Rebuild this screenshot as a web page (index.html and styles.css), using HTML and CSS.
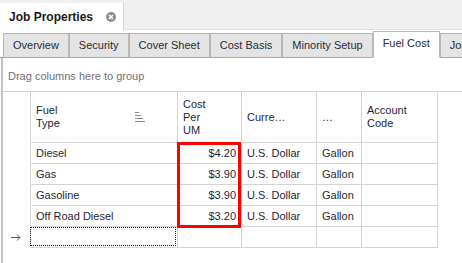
FILE: index.html
```html
<!DOCTYPE html>
<html lang="en">
  <head>
    <meta charset="UTF-8">
    <meta name="viewport" content="width=device-width, initial-scale=1.0">
    <title>Job Properties</title>
    <link rel="stylesheet" href="styles.css">
  </head>
  <body>
    <header class="doc-bar">
      <div class="doc-tab">
        <span>Job Properties</span>
        <svg class="close" viewBox="0 0 10 10" width="10" height="10" aria-hidden="true">
          <circle cx="5" cy="5" r="5" fill="#8c8c8c"/>
          <path d="M3 3l4 4M7 3l-4 4" stroke="#fff" stroke-width="1.6"/>
        </svg>
      </div>
    </header>

    <main class="panel">
      <nav class="tabs">
        <button class="tab">Overview</button>
        <button class="tab">Security</button>
        <button class="tab">Cover Sheet</button>
        <button class="tab">Cost Basis</button>
        <button class="tab">Minority Setup</button>
        <button class="tab active">Fuel Cost</button>
        <button class="tab">Job Cost Codes</button>
      </nav>

      <section class="content">
        <div class="group-panel">Drag columns here to group</div>

        <div class="grid">
          <div class="cell ind head"></div>
          <div class="cell head">
            <span>Fuel<br>Type</span>
            <svg class="sort" viewBox="0 0 12 12" width="12" height="12" aria-hidden="true">
              <path d="M1 1.5h4M1 4.5h6M1 7.5h8M1 10.5h10" stroke="#8a8a8a" stroke-width="1"/>
            </svg>
          </div>
          <div class="cell head">Cost<br>Per<br>UM</div>
          <div class="cell head">Curre…</div>
          <div class="cell head">…</div>
          <div class="cell head">Account<br>Code</div>

          <div class="cell ind"></div>
          <div class="cell">Diesel</div>
          <div class="cell num">$4.20</div>
          <div class="cell">U.S. Dollar</div>
          <div class="cell">Gallon</div>
          <div class="cell"></div>

          <div class="cell ind"></div>
          <div class="cell">Gas</div>
          <div class="cell num">$3.90</div>
          <div class="cell">U.S. Dollar</div>
          <div class="cell">Gallon</div>
          <div class="cell"></div>

          <div class="cell ind"></div>
          <div class="cell">Gasoline</div>
          <div class="cell num">$3.90</div>
          <div class="cell">U.S. Dollar</div>
          <div class="cell">Gallon</div>
          <div class="cell"></div>

          <div class="cell ind"></div>
          <div class="cell">Off Road Diesel</div>
          <div class="cell num">$3.20</div>
          <div class="cell">U.S. Dollar</div>
          <div class="cell">Gallon</div>
          <div class="cell"></div>

          <div class="cell ind">
            <svg class="arrow" viewBox="0 0 10 7" width="10" height="7" aria-hidden="true">
              <path d="M0 3.5h9M6 0.5l3 3-3 3" fill="none" stroke="#555" stroke-width="1"/>
            </svg>
          </div>
          <div class="cell focus"></div>
          <div class="cell"></div>
          <div class="cell"></div>
          <div class="cell"></div>
          <div class="cell"></div>

          <div class="highlight"></div>
        </div>
      </section>
    </main>
  </body>
</html>
```

FILE: styles.css
```css
*,
*::after,
*::before {
  box-sizing: border-box;
}

body {
  margin: 0;
  font-family: "Liberation Sans", Arial, sans-serif;
  font-size: 11px;
  color: #1f1f38;
  background: #ffffff;
  overflow: hidden;
}

button {
  font: inherit;
  color: currentcolor;
}

.doc-bar {
  height: 30px;
  padding-top: 3px;
  background: #f0f0f0;
  border-bottom: 1px solid #e2e2e2;
}

.doc-tab {
  display: flex;
  align-items: center;
  gap: 13px;
  width: 124px;
  height: 27px;
  padding-left: 9px;
  background: #ffffff;
  border-right: 1px solid #d6d6d6;
  font-size: 12px;
  font-weight: bold;
  color: #1a1a1a;
}

.tabs {
  display: flex;
  align-items: flex-end;
  height: 28px;
  padding-left: 3px;
  overflow: hidden;
  white-space: nowrap;
  background: linear-gradient(#a9a9a9, #a9a9a9) bottom / 100% 1px no-repeat;
}

.tab {
  flex: none;
  height: 25px;
  padding: 0 9px 1px;
  background: #e4e4e4;
  border: 1px solid #b7b7b7;
  border-bottom-color: #a9a9a9;
  color: #2b2b3a;
}

.tab.active {
  height: 27px;
  padding-bottom: 3px;
  background: #ffffff;
  border-bottom-color: #ffffff;
}

.content {
  margin-left: 1px;
  border-left: 2px solid #c4c4c4;
  height: 206px;
}

.group-panel {
  height: 33px;
  padding: 12px 0 0 5px;
  color: #707080;
}

.grid {
  position: relative;
  display: grid;
  grid-template-columns: 28px 147px 64px 75px 45px 76px;
  grid-template-rows: 51px repeat(5, 21px);
  border-top: 1px solid #d4d4d4;
}

.cell {
  display: flex;
  align-items: center;
  padding: 0 5px;
  border-right: 1px solid #d4d4d4;
  border-bottom: 1px solid #d4d4d4;
  white-space: nowrap;
}

.cell.head {
  line-height: 13px;
}

.cell.head:nth-child(2) {
  justify-content: space-between;
  padding-right: 31px;
}

.cell.ind {
  border-bottom-color: transparent;
  padding: 0 0 0 8px;
}

.cell.num {
  justify-content: flex-end;
}

.cell.focus {
  position: relative;
}

.cell.focus::after {
  content: "";
  position: absolute;
  inset: 0 1px 1px -1px;
  border: 1px dotted #222;
}

.highlight {
  position: absolute;
  left: 174px;
  top: 50px;
  width: 64px;
  height: 86px;
  border: 3px solid #ff0000;
}
```
